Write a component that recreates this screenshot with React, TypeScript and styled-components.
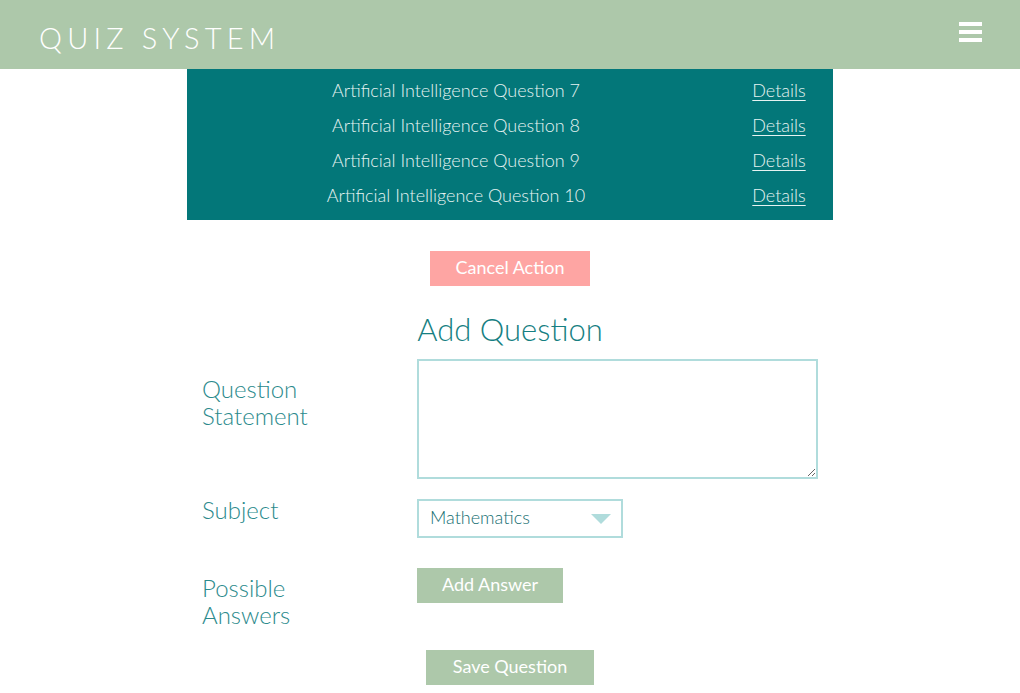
import React from "react";
import styled, { createGlobalStyle } from "styled-components";

const Global = createGlobalStyle`
  html, body { margin: 0; padding: 0; background: #fff; }
  body { font-family: Lato, "Open Sans", sans-serif; font-weight: 300; }
  * { box-sizing: border-box; }
`;

const Header = styled.header`
  height: 69px;
  background: #adc8aa;
  display: flex;
  align-items: center;
  justify-content: space-between;
  padding: 0 38px 0 39px;
`;

const Brand = styled.div`
  color: #fff;
  font-size: 29px;
  font-weight: 300;
  letter-spacing: 5.2px;
  margin-top: 5px;
`;

const MenuButton = styled.button`
  background: none;
  border: none;
  padding: 0;
  width: 23px;
  display: flex;
  flex-direction: column;
  gap: 4px;
  margin-top: -6px;
  cursor: pointer;
`;

const Bar = styled.span`
  display: block;
  height: 4px;
  width: 23px;
  background: #fff;
`;

const Main = styled.main`
  width: 646px;
  margin: 0 auto;
  display: flex;
  flex-direction: column;
  align-items: center;
`;

const ListPanel = styled.div`
  width: 646px;
  background: #037779;
  padding: 3px 0 8px;
`;

const ListRow = styled.div`
  display: grid;
  grid-template-columns: 538px 108px;
  height: 35px;
  align-items: center;
  text-align: center;
  color: #e6f3f2;
  font-size: 18px;
`;

const DetailsLink = styled.a`
  color: #e6f3f2;
  font-size: 18px;
  text-decoration: underline;
  text-underline-offset: 3px;
`;

const Button = styled.button<{ $bg: string; $w: number }>`
  background: ${(p) => p.$bg};
  width: ${(p) => p.$w}px;
  height: 35px;
  border: none;
  color: #fff;
  font-family: Lato, "Open Sans", sans-serif;
  font-weight: 400;
  font-size: 18px;
  padding: 0 0 3px;
  cursor: pointer;
`;

const CancelWrap = styled.div`
  margin-top: 31px;
`;

const Title = styled.h2`
  margin: 24px 0 11px;
  font-size: 31px;
  font-weight: 300;
  color: #167f82;
`;

const Form = styled.form`
  width: 646px;
  padding: 0 15px;
  display: flex;
  flex-direction: column;
`;

const Row = styled.div<{ $gap: number }>`
  display: grid;
  grid-template-columns: 215px 401px;
  align-items: start;
  margin-bottom: ${(p) => p.$gap}px;
`;

const Label = styled.label<{ $top: number }>`
  color: #2b8a8c;
  font-size: 24px;
  line-height: 27px;
  font-weight: 300;
  margin-top: ${(p) => p.$top}px;
`;

const TextArea = styled.textarea`
  width: 401px;
  height: 120px;
  border: 2px solid #b0dcdc;
  resize: vertical;
  font-family: Lato, sans-serif;
  display: block;
`;

const SelectBox = styled.div`
  position: relative;
  width: 206px;
  height: 39px;
  border: 2px solid #b0dcdc;
  display: flex;
  align-items: center;
  padding: 0 0 3px 11px;
  color: #136d70;
  font-size: 18px;
  font-weight: 300;
`;

const Caret = styled.span`
  position: absolute;
  right: 10px;
  top: 13px;
  width: 0;
  height: 0;
  border-left: 10px solid transparent;
  border-right: 10px solid transparent;
  border-top: 10px solid #b0dcdc;
`;

const SaveWrap = styled.div`
  display: flex;
  justify-content: center;
  margin-top: 22px;
`;

const questions = [7, 8, 9, 10];

export default function App() {
  return (
    <>
      <Global />
      <Header>
        <Brand>QUIZ SYSTEM</Brand>
        <MenuButton aria-label="menu">
          <Bar />
          <Bar />
          <Bar />
        </MenuButton>
      </Header>
      <Main>
        <ListPanel>
          {questions.map((n) => (
            <ListRow key={n}>
              <span>Artificial Intelligence Question {n}</span>
              <span>
                <DetailsLink href="#">Details</DetailsLink>
              </span>
            </ListRow>
          ))}
        </ListPanel>
        <CancelWrap>
          <Button $bg="#fea5a3" $w={160}>Cancel Action</Button>
        </CancelWrap>
        <Title>Add Question</Title>
        <Form>
          <Row $gap={20}>
            <Label $top={16}>Question<br />Statement</Label>
            <TextArea />
          </Row>
          <Row $gap={30}>
            <Label $top={-3}>Subject</Label>
            <SelectBox>
              Mathematics
              <Caret />
            </SelectBox>
          </Row>
          <Row $gap={0}>
            <Label $top={6}>Possible<br />Answers</Label>
            <div>
              <Button $bg="#adc8aa" $w={146}>Add Answer</Button>
            </div>
          </Row>
          <SaveWrap>
            <Button $bg="#adc8aa" $w={168}>Save Question</Button>
          </SaveWrap>
        </Form>
      </Main>
    </>
  );
}
